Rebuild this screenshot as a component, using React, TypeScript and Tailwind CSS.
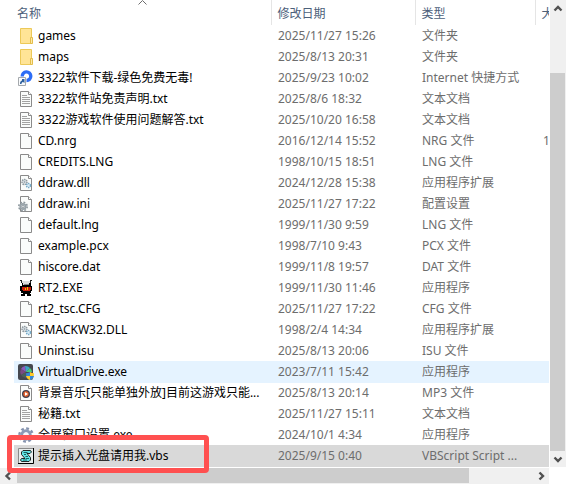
import type { ReactNode } from "react";

type IconKind =
    | "folder" | "link" | "text" | "file" | "dll" | "ini" | "game"
    | "drive" | "music" | "gear" | "script";

// One entry of the folder listing
type FileRow = {
    name: string;
    date: string;
    type: string;
    icon: IconKind;
    size?: string;
};

const files: FileRow[] = [
    { name: "games", date: "2025/11/27 15:26", type: "文件夹", icon: "folder" },
    { name: "maps", date: "2025/8/13 20:31", type: "文件夹", icon: "folder" },
    { name: "3322软件下载-绿色免费无毒!", date: "2025/9/23 10:02", type: "Internet 快捷方式", icon: "link" },
    { name: "3322软件站免责声明.txt", date: "2025/8/6 18:32", type: "文本文档", icon: "text" },
    { name: "3322游戏软件使用问题解答.txt", date: "2025/10/20 16:58", type: "文本文档", icon: "text" },
    { name: "CD.nrg", date: "2016/12/14 15:52", type: "NRG 文件", icon: "file", size: "1" },
    { name: "CREDITS.LNG", date: "1998/10/15 18:51", type: "LNG 文件", icon: "file" },
    { name: "ddraw.dll", date: "2024/12/28 15:38", type: "应用程序扩展", icon: "dll" },
    { name: "ddraw.ini", date: "2025/11/27 17:22", type: "配置设置", icon: "ini" },
    { name: "default.lng", date: "1999/11/30 9:59", type: "LNG 文件", icon: "file" },
    { name: "example.pcx", date: "1998/7/10 9:43", type: "PCX 文件", icon: "file" },
    { name: "hiscore.dat", date: "1999/11/8 19:57", type: "DAT 文件", icon: "file" },
    { name: "RT2.EXE", date: "1999/11/30 11:46", type: "应用程序", icon: "game" },
    { name: "rt2_tsc.CFG", date: "2025/11/27 17:22", type: "CFG 文件", icon: "file" },
    { name: "SMACKW32.DLL", date: "1998/2/4 14:34", type: "应用程序扩展", icon: "dll" },
    { name: "Uninst.isu", date: "2025/8/13 20:06", type: "ISU 文件", icon: "file" },
    { name: "VirtualDrive.exe", date: "2023/7/11 15:42", type: "应用程序", icon: "drive" },
    { name: "背景音乐[只能单独外放]目前这游戏只能...", date: "2025/8/13 20:14", type: "MP3 文件", icon: "music" },
    { name: "秘籍.txt", date: "2025/11/27 15:11", type: "文本文档", icon: "text" },
    { name: "全屏窗口设置.exe", date: "2024/10/1 4:34", type: "应用程序", icon: "gear" },
    { name: "提示插入光盘请用我.vbs", date: "2025/9/15 0:40", type: "VBScript Script ...", icon: "script" },
];

const hoveredFile = "VirtualDrive.exe";
const selectedFile = "提示插入光盘请用我.vbs";

// Blank sheet with a folded corner, shared by most file icons
function Sheet({ children }: { children?: ReactNode }) {
    return (
        <>
            <path d="M2.5 .5h8l3 3v12h-11z" fill="#fafcfb" stroke="#8a8a8a" />
            <path d="M10.5 .5v3h3" fill="#fff" stroke="#8a8a8a" />
            {children}
        </>
    );
}

const iconArt: Record<IconKind, ReactNode> = {
    folder: (
        <>
            <path d="M2.5 .5h11v15h-11z" fill="#ffe496" stroke="#ecc958" />
            <path d="M12.5 9.5h2v6h-2z" fill="#ffe9a6" stroke="#e3bd4b" />
        </>
    ),
    link: (
        <>
            <path d="M4.200 6.500a4.300 4.300 0 1 1 4.300 4" fill="none" stroke="#2d6df6" strokeWidth="3.400" />
            <path d="M8 7.500v6l-2-3z" fill="#2d6df6" />
            <path d="M.5 7.500h7v8h-7z" fill="#f8fafc" stroke="#a5a9ad" />
            <path d="M2 14c0-2 .5-3 2-3.500V9h2.500v4L5 12c-1 0-1.500 1-1.500 2z" fill="#2c5f9c" />
        </>
    ),
    text: (
        <Sheet>
            <path d="M4 4.500h5M4 6.500h8M4 8.500h8M4 10.500h8M4 12.500h8" stroke="#a3a3a3" />
        </Sheet>
    ),
    file: <Sheet />,
    dll: (
        <Sheet>
            <circle cx="6.500" cy="7" r="2.500" fill="#e3e8eb" stroke="#8d989f" strokeWidth="1.500" strokeDasharray="1.500 .7" />
            <circle cx="6.500" cy="7" r="1" fill="#9eacb4" />
            <circle cx="10.500" cy="10.500" r="2" fill="#dcedf6" stroke="#73a9c8" strokeWidth="1.500" strokeDasharray="1.300 .7" />
        </Sheet>
    ),
    ini: (
        <Sheet>
            <circle cx="5" cy="10.500" r="4.200" fill="none" stroke="#8c979d" strokeWidth="1.600" strokeDasharray="1.800 1.500" />
            <circle cx="5" cy="10.500" r="2.700" fill="#dce2e5" stroke="#97a2a8" strokeWidth="1.800" />
            <circle cx="5" cy="10.500" r="1.100" fill="#fff" stroke="#7d898f" strokeWidth=".8" />
        </Sheet>
    ),
    game: (
        <g shapeRendering="crispEdges">
            <path d="M4 3h9v3h1v5h-1v2h-1v1h1v2H9v-2H7v2H3v-2h2v-1H3v-2H2V6h2z" fill="#000" />
            <path d="M2 0h2v1H2zM12 0h2v1h-2zM3 1h1v2H3zM12 1h1v2h-1z" fill="#222" />
            <path d="M4 1h8v2h-1v2H5V3H4z" fill="#dcdcdc" />
            <path d="M6 4h5v1H6z" fill="#888" />
            <path d="M4 7h9v3h-1v1H5v-1H4z" fill="#c81e0a" />
            <path d="M7 8h1v2H7zM9 7h1v3H9z" fill="#f3c300" />
        </g>
    ),
    drive: (
        <>
            <rect width="15" height="16" rx="2" fill="#46484f" />
            <path d="M8 8 3 5a6 6 0 0 1 4-3z" fill="#8b5bc0" />
            <path d="M8 8 7 2a6 6 0 0 1 5 2z" fill="#3fa6c8" />
            <path d="M8 8l4-4a6 6 0 0 1 2 4z" fill="#4acb79" />
            <path d="M8 8 3 5a6 6 0 0 0 0 6z" fill="#7a4a83" />
            <path d="M8 8 3 11a6 6 0 0 0 5 3z" fill="#4b5f5c" />
            <path d="M12 8q-2 1.300-4 1.300C8 13 9 15 12 16z" fill="#3288dc" />
            <path d="M12 8q2 1.300 4 1.300C16 13 15 15 12 16z" fill="#ffc928" />
            <path d="M8 12h4v4c-2-.5-3.500-2-4-4z" fill="#ffc928" />
            <path d="M12 12h4c-.5 2-2 3.500-4 4z" fill="#3288dc" />
        </>
    ),
    music: (
        <Sheet>
            <circle cx="8" cy="9" r="4" fill="#403b4a" />
            <circle cx="8" cy="9" r="2.700" fill="#e7632d" />
            <path d="M7 7.200v3.600L10 9z" fill="#fff" />
        </Sheet>
    ),
    gear: (
        <>
            <circle cx="8" cy="8" r="6.600" fill="none" stroke="#8492ae" strokeWidth="2.400" strokeDasharray="2.800 2.380" />
            <circle cx="8" cy="8" r="4.200" fill="none" stroke="#8c9ab6" strokeWidth="3" />
            <circle cx="8" cy="8" r="2.500" fill="#f7f8fb" />
        </>
    ),
    script: (
        <>
            <path d="M.5 .5h15v15H.5z" fill="#e8eded" stroke="#8a8a8a" />
            <path d="M0 15.500h15.500V0" fill="none" stroke="#000" />
            <path d="M5 2.500h7.500l1 1.500-1.500 1.500H9l3.500 4v2.500L11 13.500H3.500L2.500 12l1-1.500H7L3.500 6.500V4z" fill="#62e3e3" stroke="#111" strokeWidth=".9" />
            <path d="M5.500 4.500h4M6 6.500h2M7.500 8.500h2.500M8 10.500h3M5 12h4" stroke="#0b5656" strokeWidth=".9" />
        </>
    ),
};

function FileIcon({ kind }: { kind: IconKind }) {
    return (
        <svg viewBox="0 0 16 16" className="size-4 shrink-0" aria-hidden="true">
            {iconArt[kind]}
        </svg>
    );
}

// Arrow at the end of a scroll bar
function ScrollButton({ label, path }: { label: string; path: string }) {
    return (
        <button type="button" aria-label={label} className="flex size-4 shrink-0 items-center justify-center">
            <svg viewBox="0 0 16 16" className="size-4" aria-hidden="true">
                <path d={path} fill="none" stroke="#505050" strokeWidth="2.400" />
            </svg>
        </button>
    );
}

function rowColor(name: string) {
    if (name === selectedFile) return "bg-[#d9d9d9] shadow-[0_1px_0_#d9d9d9]";
    if (name === hoveredFile) return "bg-[#e5f3ff] shadow-[0_1px_0_#e5f3ff]";
    return "";
}

export default function App() {
    return (
        <div className="relative w-full bg-white font-['Noto_Sans','Noto_Sans_CJK_SC',sans-serif] text-xs">
            <div className="flex">
                {/* File list */}
                <div className="min-w-0 flex-1 overflow-hidden pr-px pb-0.5 pl-3.5">
                    <table className="w-full table-fixed border-collapse whitespace-nowrap">
                        <colgroup>
                            <col className="w-[257px]" />
                            <col className="w-36" />
                            <col className="w-[120px]" />
                            <col />
                        </colgroup>
                        <thead className="text-left text-[#4c607a]">
                            <tr className="h-[25px]">
                                <th scope="col" className="relative p-0 pt-0.5 pl-[3px] font-normal">
                                    名称
                                    {/* Sort direction marker */}
                                    <svg viewBox="0 0 9 5" className="absolute inset-x-0 top-0 mx-auto h-[5px] w-[9px]" aria-hidden="true">
                                        <path d="M.5 4.500l4-4 4 4" fill="none" stroke="#6d6d6d" />
                                    </svg>
                                </th>
                                <th scope="col" className="border-l border-[#e5e5e5] p-0 pt-0.5 pl-1.5 font-normal">修改日期</th>
                                <th scope="col" className="border-l border-[#e5e5e5] p-0 pt-0.5 pl-1.5 font-normal">类型</th>
                                <th scope="col" className="overflow-hidden border-l border-[#e5e5e5] p-0 pt-0.5 pl-1.5 font-normal">大小</th>
                            </tr>
                        </thead>
                        <tbody className="text-[#6d6d6d]">
                            {files.map((file) => (
                                <tr key={file.name} className={`h-[21px] ${rowColor(file.name)}`}>
                                    <td className="p-0 pl-1 text-black">
                                        <div className="flex h-[21px] items-center gap-1">
                                            <FileIcon kind={file.icon} />
                                            <span>{file.name}</span>
                                        </div>
                                    </td>
                                    <td className="p-0 pl-[7px]">{file.date}</td>
                                    <td className="p-0 pl-[7px]">{file.type}</td>
                                    <td className="overflow-hidden p-0 pl-2">{file.size}</td>
                                </tr>
                            ))}
                        </tbody>
                    </table>
                </div>

                {/* Vertical scroll bar */}
                <div className="mb-px flex w-4 flex-col bg-[#f0f0f0]">
                    <ScrollButton label="向上滚动" path="M4.500 10.500l3.500-3.500 3.500 3.500" />
                    <div className="mt-[57px] mr-px flex-1 bg-[#cdcdcd]" />
                    <ScrollButton label="向下滚动" path="M4.500 6.500l3.500 3.500 3.500-3.500" />
                </div>
            </div>

            {/* Horizontal scroll bar */}
            <div className="mr-[17px] flex h-4 bg-[#f0f0f0]">
                <ScrollButton label="向左滚动" path="M10 4.500l-3.500 3.500 3.500 3.500" />
                <div className="mr-16 mb-px ml-px flex-1 bg-[#cdcdcd]" />
                <ScrollButton label="向右滚动" path="M6.500 4.500l3.500 3.500-3.500 3.500" />
            </div>

            {/* Red marker around the script to run */}
            <div className="pointer-events-none absolute bottom-[11px] left-[7px] h-[38px] w-[202px] rounded-sm border-5 border-[#ff5050]" />
        </div>
    );
}
